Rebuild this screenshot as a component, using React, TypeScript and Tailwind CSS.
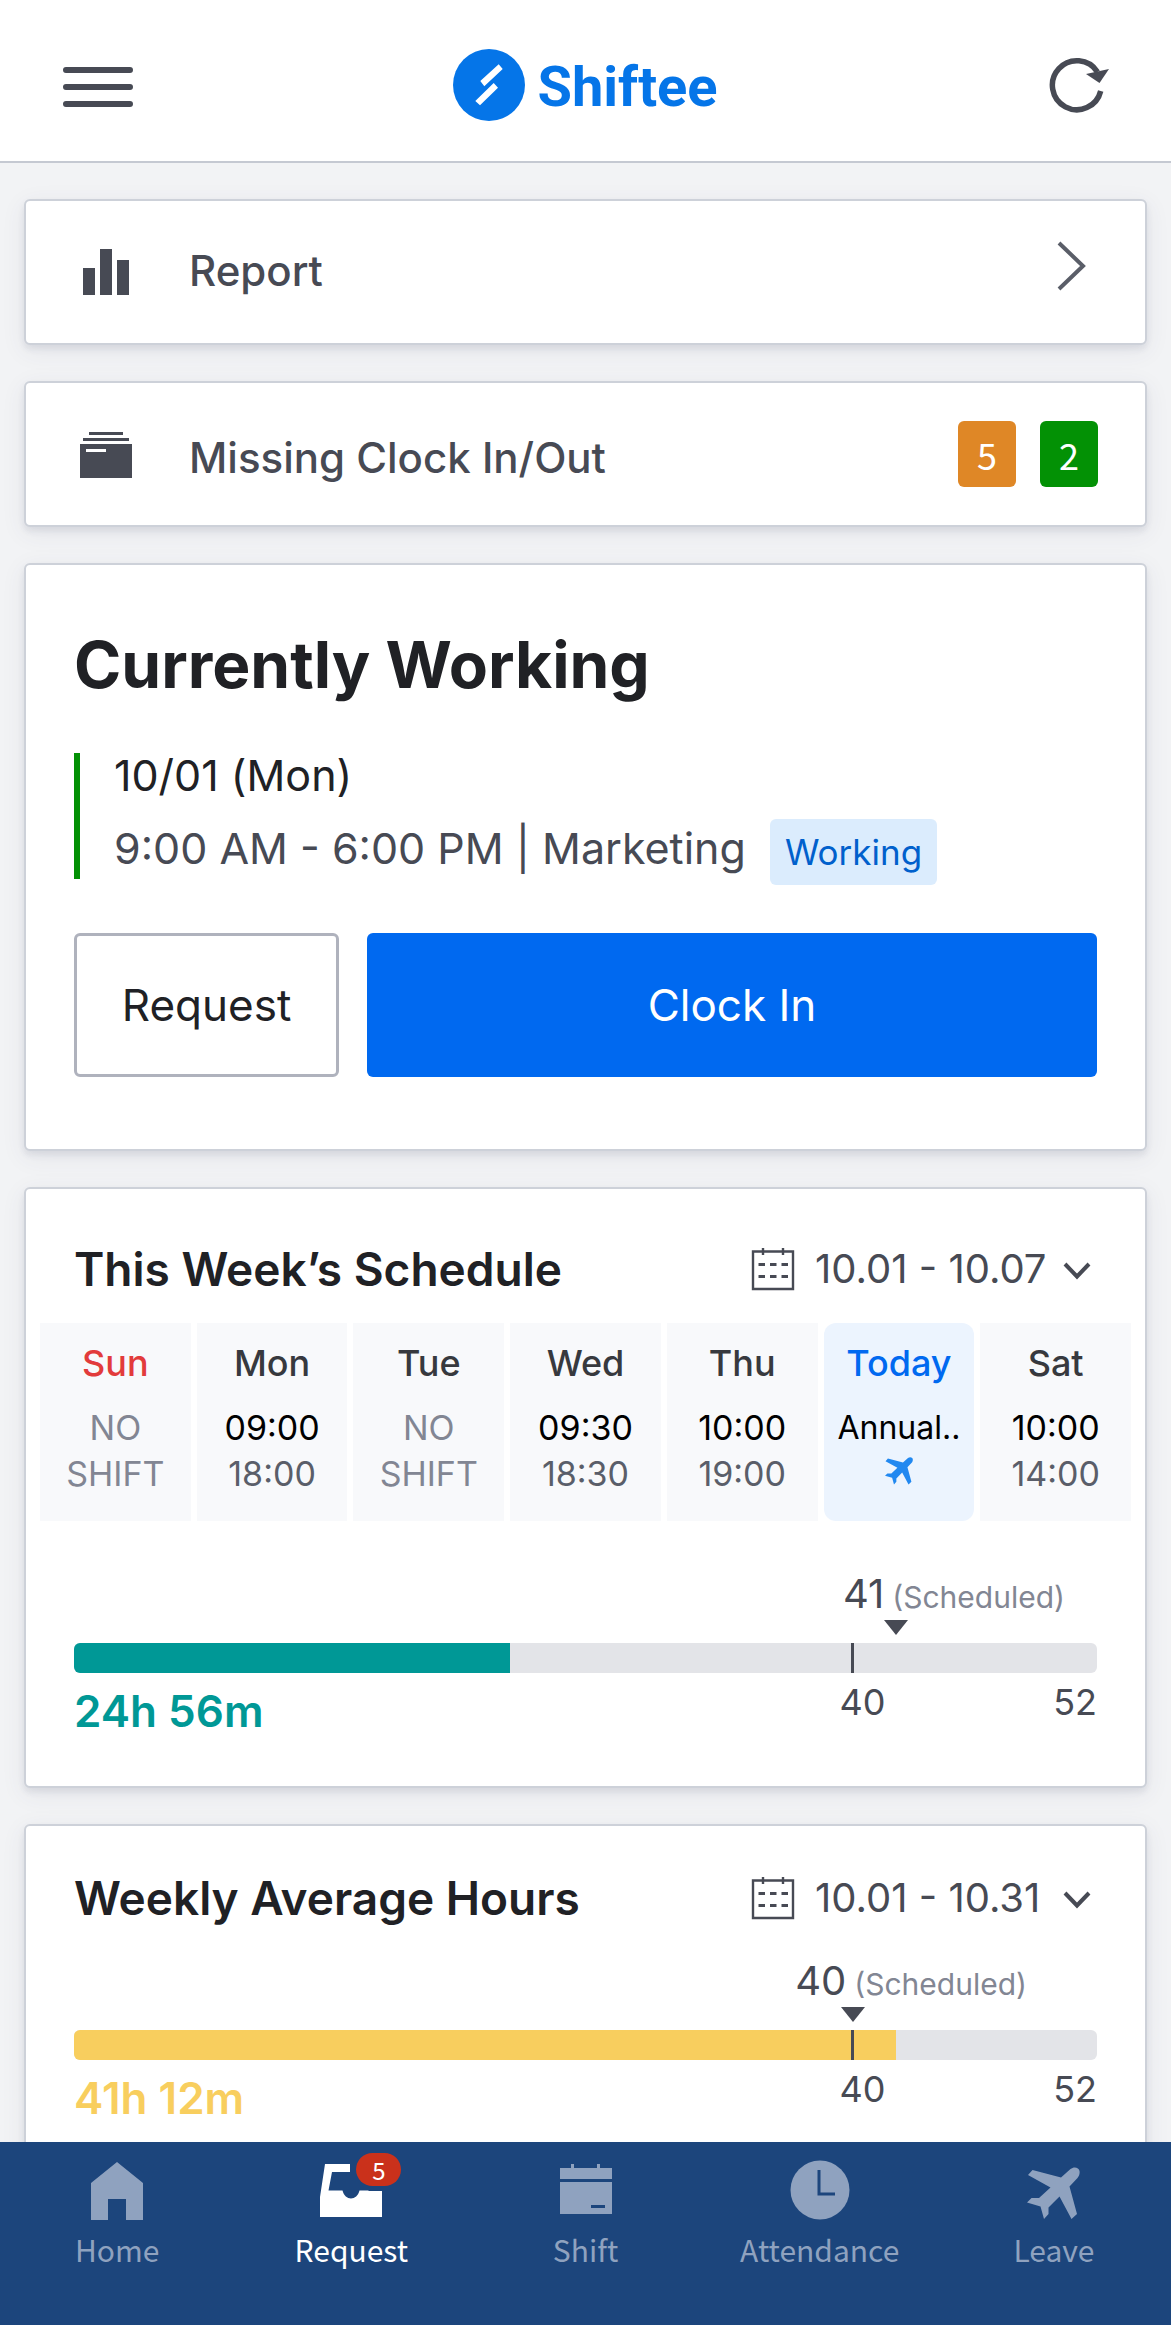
import React from "react";

const inter = "font-['Inter',sans-serif]";
const navFont = "font-['Noto_Sans_CJK_KR',sans-serif]";

function Card({ children, className = "" }: { children: React.ReactNode; className?: string }) {
  return (
    <section className={"shrink-0 rounded-md border-2 border-[#cdd1d9] bg-white shadow-[0_4px_6px_rgba(60,70,100,0.10),0_6px_24px_rgba(60,70,100,0.08)] " + className}>
      {children}
    </section>
  );
}

function Plane({ className }: { className: string }) {
  return (
    <svg viewBox="0 0 53 53" className={className} fill="currentColor" aria-hidden="true">
      <path d="M34 10.500L43.500 2C47 -1 52 0.500 52.500 4C53 7 52 9 50.500 11L42.500 19.500L50 47L44.500 52L32.500 29.500L21.500 40.500L21.500 47L17 52L13.500 39.500L0 35.500L4.500 31L12 31L23.500 20.500L1 8L5.500 3Z" />
    </svg>
  );
}

function DateRange({ label }: { label: string }) {
  return (
    <button type="button" className="flex items-center text-[#474a54]">
      <svg viewBox="0 0 44 44" className="mr-5 h-11 w-11" fill="none" stroke="currentColor" strokeWidth="2.400" aria-hidden="true">
        <path d="M2 4.500H42V42H2Z" />
        <path d="M12 1V8M32 1V8" />
        <path d="M7.500 17.500H14M19 17.500H25.500M30.500 17.500H37M7.500 29.500H14M19 29.500H25.500M30.500 29.500H37" strokeWidth="3" />
      </svg>
      <span className="min-w-[236px] text-left text-[40px] leading-[48px]">{label}</span>
      <svg viewBox="0 0 28 18" className="mt-1 ml-3 h-[18px] w-7" fill="none" stroke="currentColor" strokeWidth="4" aria-hidden="true">
        <path d="M2 2L14 14.500L26 2" />
      </svg>
    </button>
  );
}

type Day = { name: string; top: string; bottom?: string; kind?: "off" | "sun" | "today" };
const days: Day[] = [
  { name: "Sun", top: "NO", bottom: "SHIFT", kind: "sun" },
  { name: "Mon", top: "09:00", bottom: "18:00" },
  { name: "Tue", top: "NO", bottom: "SHIFT", kind: "off" },
  { name: "Wed", top: "09:30", bottom: "18:30" },
  { name: "Thu", top: "10:00", bottom: "19:00" },
  { name: "Today", top: "Annual..", kind: "today" },
  { name: "Sat", top: "10:00", bottom: "14:00" },
];

function DayCell({ day }: { day: Day }) {
  const off = day.kind === "off" || day.kind === "sun";
  const nameColor = day.kind === "sun" ? "text-[#e23b3b]" : day.kind === "today" ? "text-[#0069f0]" : "text-[#37393e]";
  return (
    <li className={"flex flex-col items-center pt-[17px] pb-6 " + (day.kind === "today" ? "rounded-xl bg-[#ecf4fe]" : "bg-[#f8f9fb]")}>
      <span className={"text-[36px] leading-[46px] font-medium " + nameColor}>{day.name}</span>
      <span className={"mt-[19px] leading-[46px] " + (day.kind === "today" ? "text-[32px] " : "text-[34px] ") + (off ? "text-[#828693]" : "text-black")}>{day.top}</span>
      {day.bottom ? (
        <span className={"text-[34px] leading-[46px] " + (off ? "text-[#828693]" : "text-[#5a5e69]")}>{day.bottom}</span>
      ) : (
        <Plane className="mt-[6px] h-7 w-7 text-[#2188f0]" />
      )}
    </li>
  );
}

function Meter({ done, scheduled, fill, color, marker, labelPad, text }: {
  done: string; scheduled: string; fill: number; color: string; marker: number; labelPad: string; text: string;
}) {
  return (
    <div className="px-12">
      <div className={"flex items-baseline justify-end gap-2 text-[#474a54] " + labelPad}>
        <span className="text-[40px] leading-[46px]">{scheduled}</span>
        <span className="text-[30px] leading-[46px] text-[#828693]">(Scheduled)</span>
      </div>
      <div className="relative h-[23px]">
        <svg viewBox="0 0 24 15" className="absolute h-[15px] w-6 -translate-x-1/2" style={{ left: marker + "%" }} fill="#474a54" aria-hidden="true">
          <path d="M0 0H24L12 15Z" />
        </svg>
      </div>
      <div className="relative h-[30px] overflow-hidden rounded-md bg-[#e3e4e8]">
        <div className={"h-full " + color} style={{ width: fill + "%" }} />
        <div className="absolute top-0 left-[76%] h-full w-[3px] bg-[#474a54]" />
      </div>
      <div className="flex justify-between">
        <strong className={"pt-[10px] text-[44px] leading-[57px] font-semibold " + text}>{done}</strong>
        <div className="flex w-[24%] justify-between pt-[6px] text-[36px] leading-[46px] text-[#474a54]">
          <span className="-ml-3">40</span>
          <span>52</span>
        </div>
      </div>
    </div>
  );
}

function NavItem({ label, active, children }: { label: string; active?: boolean; children: React.ReactNode }) {
  return (
    <a href="#" className={"flex flex-1 flex-col items-center pt-[17px] " + (active ? "text-white" : "text-[#8fa2bf]")}>
      {children}
      <span className={"mt-[6px] text-[30px] leading-[44px] " + navFont}>{label}</span>
    </a>
  );
}

export default function App() {
  return (
    <div className={"flex h-screen flex-col overflow-hidden bg-[#f2f3f5] text-[#202125] " + inter}>
      <header className="flex h-[163px] shrink-0 items-center justify-between border-b-2 border-[#c5c9d2] bg-white px-[62px] pt-2">
        <button type="button" aria-label="Menu">
          <svg viewBox="0 0 72 44" className="mt-1 h-11 w-[72px]" stroke="#474a54" strokeWidth="6" strokeLinecap="round" aria-hidden="true">
            <path d="M4 5H68M4 22H68M4 39H68" />
          </svg>
        </button>
        <div className="flex items-center gap-3 text-[#0575e8]">
          <svg viewBox="0 0 72 72" className="h-[72px] w-[72px]" aria-hidden="true">
            <circle cx="36" cy="36" r="36" fill="currentColor" />
            <path d="M45.700 15.300L49.700 20L31.300 37.300L27.300 32ZM40.700 34L45 38.700L27 56.300L22.300 52Z" fill="#fff" />
          </svg>
          <span className="pt-1 font-['Roboto',sans-serif] text-[56px] leading-[64px] font-bold">Shiftee</span>
        </div>
        <button type="button" aria-label="Refresh" className="flex w-[72px] justify-end">
          <svg viewBox="0 0 60 56" className="h-14 w-[60px]" aria-hidden="true">
            <path d="M51.700 34A24.500 24.500 0 1 1 48.500 15" fill="none" stroke="#474a54" strokeWidth="5.500" />
            <path d="M37 17L60 12L50.500 26Z" fill="#474a54" />
          </svg>
        </button>
      </header>

      <main className="flex min-h-0 flex-1 flex-col gap-9 overflow-hidden px-6 pt-9">
        <Card>
          <a href="#" className="flex h-[142px] items-center pr-[58px] pl-[54px] text-[#474a54]">
            <svg viewBox="0 0 52 46" className="h-[46px] w-[52px]" fill="currentColor" aria-hidden="true">
              <path d="M3 19H15V46H3ZM20 0H32V46H20ZM37 11H49V46H37Z" />
            </svg>
            <span className="ml-[57px] flex-1 pb-[2px] text-[42px] leading-[54px] font-medium">Report</span>
            <svg viewBox="0 0 30 50" className="mb-3 h-[50px] w-[30px]" fill="none" stroke="#5a5e68" strokeWidth="4" aria-hidden="true">
              <path d="M2 2L26 25L2 48" />
            </svg>
          </a>
        </Card>

        <Card>
          <a href="#" className="flex h-[142px] items-center pr-[47px] pl-[54px] text-[#474a54]">
            <svg viewBox="0 0 52 46" className="mt-[2px] h-[46px] w-[52px]" aria-hidden="true">
              <path d="M9 0H43V3H9ZM3 6H49V9H3ZM0 12H52V46H0Z" fill="currentColor" />
              <path d="M6 17H26V20H6Z" fill="#fff" />
            </svg>
            <span className="ml-[57px] flex-1 pt-2 text-[42px] leading-[54px] font-medium">Missing Clock In/Out</span>
            <span className={"flex gap-6 text-[36px] leading-[66px] text-white " + navFont}>
              <span className="w-[58px] rounded-md bg-[#df8726] text-center">5</span>
              <span className="w-[58px] rounded-md bg-[#039105] text-center">2</span>
            </span>
          </a>
        </Card>

        <Card className="px-12 pt-[58px] pb-[72px]">
          <h1 className="text-[64px] leading-[84px] font-bold">Currently Working</h1>
          <div className="mt-[46px] flex flex-col items-start border-l-6 border-[#039105] pl-[34px] text-[43px]">
            <span className="leading-[44px]">10/01 (Mon)</span>
            <div className="mt-[22px] -mb-[6px] flex items-center gap-6 text-[#474a54]">
              <span className="pb-2 leading-[54px]">9:00 AM - 6:00 PM | Marketing</span>
              <span className="rounded-md bg-[#dbecfd] px-[15px] text-[35px] leading-[66px] text-[#0060cc]">Working</span>
            </div>
          </div>
          <div className="mt-[54px] flex gap-7 text-[44px] leading-[56px]">
            <button type="button" className="h-36 w-[265px] rounded-md border-3 border-[#afb2bd] bg-white">Request</button>
            <button type="button" className="h-36 flex-1 rounded-md bg-[#0069f0] text-white">Clock In</button>
          </div>
        </Card>

        <Card className="pt-[50px] pb-[46px]">
          <div className="flex items-center justify-between pr-[54px] pl-12">
            <h2 className="text-[46px] leading-[60px] font-semibold">This Week’s Schedule</h2>
            <DateRange label="10.01 - 10.07" />
          </div>
          <ul className="mt-6 grid grid-cols-7 gap-[6px] px-[14px]">
            {days.map((d) => <DayCell key={d.name} day={d} />)}
          </ul>
          <div className="mt-[50px]">
            <Meter done="24h 56m" scheduled="41" fill={42.6} color="bg-[#009896]" marker={80.4} labelPad="pr-8" text="text-[#009896]" />
          </div>
        </Card>

        <Card className="pt-[42px] pb-[46px]">
          <div className="flex items-center justify-between pr-[54px] pl-12">
            <h2 className="text-[46px] leading-[60px] font-semibold">Weekly Average Hours</h2>
            <DateRange label="10.01 - 10.31" />
          </div>
          <div className="mt-[30px]">
            <Meter done="41h 12m" scheduled="40" fill={80.4} color="bg-[#f8ce5e]" marker={76.1} labelPad="pr-[70px]" text="text-[#f8ce5e]" />
          </div>
        </Card>
      </main>

      <nav className="flex h-[183px] shrink-0 bg-[#1c457c]">
        <NavItem label="Home">
          <svg viewBox="0 0 60 62" className="h-[62px] w-[60px]" fill="currentColor" aria-hidden="true">
            <path d="M30 3L56 24V61H39V40H21V61H4V24Z" />
          </svg>
        </NavItem>
        <NavItem label="Request" active>
          <span className="relative">
            <svg viewBox="0 0 62 62" className="h-[62px] w-[62px]" fill="currentColor" aria-hidden="true">
              <path d="M5 5H30V13H12L8.500 31.500H22.500C25 42 37 42 39.500 31.500H48L49 32H62V58H0V38Z" />
            </svg>
            <span className={"absolute -top-[6px] left-9 w-[45px] rounded-full bg-[#ca311b] text-center text-[24px] leading-[33px] " + navFont}>5</span>
          </span>
        </NavItem>
        <NavItem label="Shift">
          <svg viewBox="0 0 60 62" className="h-[62px] w-[60px]" fill="currentColor" aria-hidden="true">
            <path d="M4 9H15V5H18V9H41V5H44V9H56V20H4Z" />
            <path fillRule="evenodd" d="M4 23H56V55H4ZM35 46H49V49H35Z" />
          </svg>
        </NavItem>
        <NavItem label="Attendance">
          <svg viewBox="0 0 60 62" className="h-[62px] w-[60px]" aria-hidden="true">
            <circle cx="30" cy="31" r="29.500" fill="currentColor" />
            <path d="M29 11V35H45" fill="none" stroke="#1c457c" strokeWidth="3" />
          </svg>
        </NavItem>
        <NavItem label="Leave">
          <Plane className="mt-2 mb-[1px] h-[53px] w-[53px]" />
        </NavItem>
      </nav>
    </div>
  );
}
